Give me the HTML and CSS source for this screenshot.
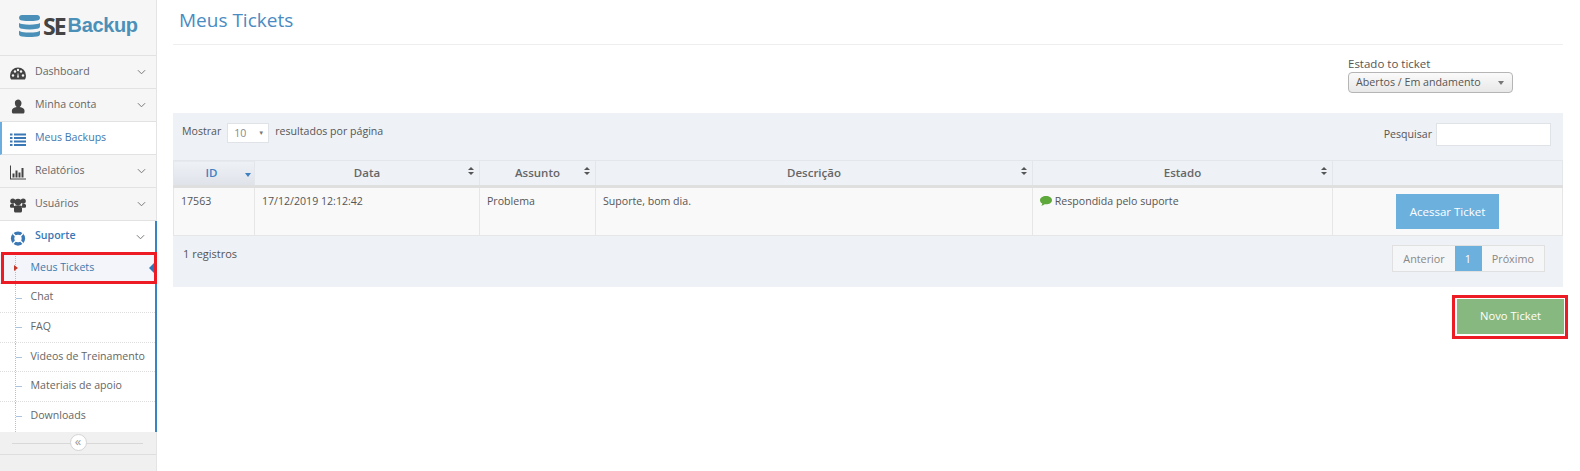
FILE: index.html
```html
<!DOCTYPE html>
<html lang="pt">
<head>
<meta charset="utf-8">
<title>Meus Tickets</title>
<link rel="stylesheet" href="styles.css">
</head>
<body>
<div class="app">
  <aside class="sidebar">
    <div class="logo">
      <svg class="logo-db" width="21" height="22" viewBox="0 0 21 22"><g fill="#4b90b8"><path d="M3 0h15c1.700 0 3 1.200 3 2.700S19.700 5.500 18 5.500c-5 .8-10 .8-15 0C1.300 5.500 0 4.200 0 2.700S1.300 0 3 0z"/><path d="M0 8c1 .6 2 1 3 1.100 5 .7 10 .7 15 0 1-.1 2-.5 3-1.100v3.200c0 1.400-1.300 2.500-3 2.600-5 .8-10 .8-15 0-1.700-.1-3-1.200-3-2.600z"/><path d="M0 15.800c1 .6 2 1 3 1.100 5 .7 10 .7 15 0 1-.1 2-.5 3-1.100V19c0 1.400-1.300 2.500-3 2.600-5 .6-10 .6-15 0-1.700-.1-3-1.200-3-2.600z"/></g></svg>
      <span class="logo-se">SE</span><span class="logo-backup">Backup</span>
    </div>
    <nav class="menu">
      <a class="item"><svg class="ico" viewBox="0 0 16 14"><path fill="#444" d="M8 1a8 8 0 0 0-8 8c0 1.500.4 3 1.100 4h13.800c.7-1 1.100-2.500 1.100-4a8 8 0 0 0-8-8z"/><g fill="#f6f6f6"><circle cx="3" cy="9" r="1.200"/><circle cx="5" cy="5" r="1.200"/><circle cx="8" cy="3.500" r="1.200"/><circle cx="11" cy="5" r="1.200"/><circle cx="13" cy="9" r="1.200"/><path d="M7 11l1-5 1 5z"/></g></svg><span class="label">Dashboard</span><svg class="chev" viewBox="0 0 10 6"><path d="M1 1l4 4 4-4"/></svg></a>
      <a class="item"><svg class="ico" viewBox="0 0 16 14"><path fill="#444" d="M8 0a3.500 3.500 0 0 1 3.500 3.800c0 1.500-.8 3-1.800 3.700 2.800.5 4.800 1.500 4.800 3.500v1.500c0 .8-.6 1.500-1.500 1.500h-9.600c-.9 0-1.500-.7-1.500-1.500V11c0-2 2-3 4.800-3.500-1-.7-1.800-2.200-1.800-3.700A3.500 3.500 0 0 1 8 0z"/></svg><span class="label">Minha conta</span><svg class="chev" viewBox="0 0 10 6"><path d="M1 1l4 4 4-4"/></svg></a>
      <a class="item active-link"><svg class="ico" viewBox="0 0 16 14"><path fill="#3a78b5" d="M0 1h2.500v2H0zM4 1h12v2H4zM0 4.500h2.500v2H0zM4 4.500h12v2H4zM0 8h2.500v2H0zM4 8h12v2H4zM0 11.500h2.500v2H0zM4 11.500h12v2H4z"/></svg><span class="label">Meus Backups</span></a>
      <a class="item"><svg class="ico" viewBox="0 0 16 14"><path fill="#444" d="M0 0h1v13h15v1H0zM2.500 8h2v4h-2zM5.500 5h2v7h-2zM8.500 7h2v5h-2zM11.500 2.500h2V12h-2z"/></svg><span class="label">Relatórios</span><svg class="chev" viewBox="0 0 10 6"><path d="M1 1l4 4 4-4"/></svg></a>
      <a class="item"><svg class="ico" viewBox="0 0 16 14"><g fill="#444"><circle cx="2.800" cy="2.600" r="2.600"/><circle cx="13.200" cy="2.600" r="2.600"/><circle cx="8" cy="3.600" r="3.300"/><path d="M0 6.200c1-.8 2-1 3.700-.8l.6 3.800H1.500C.6 9.200 0 8.700 0 7.900zM16 6.200c-1-.8-2-1-3.700-.8l-.6 3.800h2.800c.9 0 1.500-.5 1.500-1.300zM4 7.500c2.300-1 5.700-1 8 0v5c0 .8-.6 1.500-1.500 1.500h-5c-.9 0-1.500-.7-1.500-1.500z"/></g></svg><span class="label">Usuários</span><svg class="chev" viewBox="0 0 10 6"><path d="M1 1l4 4 4-4"/></svg></a>
      <div class="group">
        <a class="item open"><svg class="ico" viewBox="0 0 16 16"><circle cx="8" cy="8" r="7.600" fill="#3a78b5"/><circle cx="8" cy="8" r="3.900" fill="#fff"/><g stroke="#fff" stroke-width="1.500"><path d="M2.500 2.500l3 3M13.500 2.500l-3 3M2.500 13.500l3-3M13.500 13.500l-3-3"/></g></svg><span class="label">Suporte</span><svg class="chev" viewBox="0 0 10 6"><path d="M1 1l4 4 4-4"/></svg></a>
        <ul class="submenu">
          <li class="sub current"><span>Meus Tickets</span></li>
          <li class="sub"><span>Chat</span></li>
          <li class="sub"><span>FAQ</span></li>
          <li class="sub"><span>Videos de Treinamento</span></li>
          <li class="sub"><span>Materiais de apoio</span></li>
          <li class="sub"><span>Downloads</span></li>
        </ul>
      </div>
    </nav>
    <div class="collapse"><span class="collapse-btn">«</span></div>
  </aside>
  <main class="content">
    <h1 class="title">Meus Tickets</h1>
    <div class="status-filter">
      <label class="status-label">Estado to ticket</label>
      <div class="status-select">Abertos / Em andamento</div>
    </div>
    <section class="panel">
      <div class="panel-top">
        <div class="length">Mostrar <span class="length-select">10</span> resultados por página</div>
        <div class="search">Pesquisar <span class="search-input"></span></div>
      </div>
      <table class="tickets">
        <colgroup><col class="c1"><col class="c2"><col class="c3"><col class="c4"><col class="c5"><col></colgroup>
        <thead>
          <tr>
            <th class="sorted">ID</th>
            <th class="sortable">Data</th>
            <th class="sortable">Assunto</th>
            <th class="sortable">Descrição</th>
            <th class="sortable">Estado</th>
            <th></th>
          </tr>
        </thead>
        <tbody>
          <tr>
            <td>17563</td>
            <td>17/12/2019 12:12:42</td>
            <td>Problema</td>
            <td>Suporte, bom dia.</td>
            <td><svg class="bubble" viewBox="0 0 12 10"><path fill="#5fa83c" d="M6 0c3.300 0 6 1.800 6 4.200S9.300 8.300 6 8.300c-.5 0-1 0-1.400-.1C3.700 9 2.500 9.500 1.200 9.700c.6-.6 1-1.300 1.100-2.200C.9 6.800 0 5.600 0 4.200 0 1.800 2.700 0 6 0z"/></svg> Respondida pelo suporte</td>
            <td class="action"><span class="btn-access">Acessar Ticket</span></td>
          </tr>
        </tbody>
      </table>
      <div class="panel-bottom">
        <div class="count">1 registros</div>
        <div class="pager"><span class="page">Anterior</span><span class="page on">1</span><span class="page">Próximo</span></div>
      </div>
    </section>
    <div class="new-row"><span class="btn-new">Novo Ticket</span></div>
  </main>
</div>
<div class="mark mark-menu"></div>
</body>
</html>
```
FILE: styles.css
```css
* { box-sizing: border-box; }
html, body { margin: 0; padding: 0; height: 471px; overflow: hidden; background: #fff; }
body { font-family: "Open Sans", "Liberation Sans", sans-serif; font-size: 10.600px; color: #555; position: relative; }
.app { display: flex; height: 471px; }

.sidebar { width: 157px; flex: none; background: #f0f0f0; border-right: 1px solid #e4e4e4; display: flex; flex-direction: column; }
.logo { height: 56px; background: #f6f6f6; border-bottom: 1px solid #e2e2e2; display: flex; align-items: center; padding: 0 0 4px 19px; }
.logo-db { flex: none; margin-right: 3px; }
.logo-se { font-family: "Open Sans", sans-serif; font-weight: 700; font-size: 23px; letter-spacing: -2px; color: #444; margin-right: 3px; }
.logo-backup { font-family: "Liberation Sans", sans-serif; font-weight: 700; font-size: 20px; letter-spacing: -.35px; color: #4b90b8; }

.menu { display: flex; flex-direction: column; }
.item { height: 33px; display: flex; align-items: center; background: #f6f6f6; border-bottom: 1px solid #e2e2e2; padding: 0 10px 3px 10px; color: #666; flex: none; }
.ico { width: 16px; height: 15px; flex: none; margin-right: 9px; margin-top: 5px; }
.label { flex: 1; }
.chev { width: 9px; height: 6px; flex: none; fill: none; stroke: #777; stroke-width: 1.100; margin-top: 2px; }
.active-link { background: #fff; border-left: 2px solid #6cade0; padding-left: 8px; color: #3f78ad; }
.group { background: #fff; border-right: 2px solid #3a84c4; margin-right: -1px; }
.open { background: #fff; border-bottom: 0; color: #3a78b5; font-weight: 600; padding-bottom: 5px; }
.open .chev { margin-top: 4px; }
.open .ico { margin-top: 7px; }
.submenu { list-style: none; margin: 0; padding: 0; background: #fff; }
.sub { height: 29.600px; display: flex; align-items: center; padding-left: 30.500px; padding-bottom: 3px; border-bottom: 1px dotted #ddd; color: #666; position: relative; }
.sub::before { content: ""; position: absolute; left: 15px; top: 0; bottom: 0; border-left: 1px dotted #a9c4dc; }
.sub::after { content: ""; position: absolute; left: 16px; top: 14px; width: 6px; border-top: 1px dashed #a9c4dc; }
.sub:last-child { border-bottom: 0; }
.current { background: #f3f5fa; color: #3f78ad; }
.current::after { left: 14px; top: 11px; width: 0; height: 0; border: 3px solid transparent; border-left: 4px solid #c0392b; border-right: 0; }
.current span::after { content: ""; position: absolute; right: 0; top: 8px; border: 6.500px solid transparent; border-right: 6px solid #2f78b8; border-left: 0; }
.collapse { height: 23px; border-bottom: 1px solid #dedede; background: #f0f0f0; display: flex; align-items: center; justify-content: center; position: relative; }
.collapse::before { content: ""; position: absolute; left: 12px; right: 13px; top: 11px; border-top: 1px solid #d8d8d8; }
.collapse-btn { width: 17px; height: 17px; border-radius: 50%; border: 1px solid #d4d4d4; background: #fff; color: #9a9a9a; font-size: 13px; line-height: 13px; text-align: center; position: relative; }

.content { flex: 1; padding: 0 17px 0 16px; min-width: 0; }
.title { margin: 0; height: 45px; padding: 7px 0 0 6px; border-bottom: 1px solid #eee; font-size: 19px; font-weight: 400; line-height: 26px; color: #4a8bc2; }
.status-filter { height: 68px; padding: 11px 0 0 1175px; }
.status-label { display: block; font-size: 11.500px; line-height: 15px; color: #555; }
.status-select { width: 165px; height: 21px; margin-top: 1px; border: 1px solid #b5b5b5; border-radius: 4px; background: linear-gradient(#fafafa, #e8e8e8); padding-left: 7px; line-height: 19px; font-size: 10.700px; color: #555; position: relative; }
.status-select::after { content: ""; position: absolute; right: 8px; top: 8px; border: 3.500px solid transparent; border-top: 4px solid #777; border-bottom: 0; }

.panel { background: #eef1f6; height: 174px; display: flex; flex-direction: column; }
.panel-top { height: 47px; display: flex; justify-content: space-between; padding: 10px 12px 0 9px; }
.length { display: flex; align-items: flex-start; line-height: 16px; color: #555; }
.length-select { width: 42px; height: 20px; margin: 0 6px 0 6px; background: #fff; border: 1px solid #dfe3e8; padding-left: 6px; color: #888; line-height: 18px; position: relative; }
.length-select::after { content: "▼"; position: absolute; right: 4px; top: 0; font-size: 6px; color: #777; }
.search { display: flex; align-items: flex-start; line-height: 22px; color: #555; gap: 4px; }
.search-input { width: 115px; height: 23px; background: #fff; border: 1px solid #dfe3e8; }

.tickets { width: 1390px; table-layout: fixed; border-collapse: collapse; font-size: 10.600px; }
.c1 { width: 81px; } .c2 { width: 225px; } .c3 { width: 116px; } .c4 { width: 437px; } .c5 { width: 300px; }
.tickets th { height: 26px; border: 1px solid #e3e6ea; border-bottom: 3px solid #dfdfdf; font-size: 11.500px; font-weight: 600; color: #666; text-align: center; padding: 0 0 2px; position: relative; }
.sortable::before, .sortable::after { content: ""; position: absolute; right: 5px; border: 3px solid transparent; }
.sortable::before { top: 6px; border-bottom: 3.500px solid #555; border-top: 0; }
.sortable::after { top: 11px; border-top: 3.500px solid #555; border-bottom: 0; }
.tickets th.sorted { color: #3f80c0; background: linear-gradient(#eef1f6, #dfe3e9); padding-right: 5px; }
.sorted::after { content: ""; position: absolute; right: 3px; top: 12px; border: 3.500px solid transparent; border-top: 4px solid #3f80c0; border-bottom: 0; }
.tickets td { height: 49px; background: #f9f9f9; border: 1px solid #e6e6e6; vertical-align: top; padding: 6px 7px 0; line-height: 15px; color: #555; white-space: nowrap; }
.tickets td.action { text-align: center; padding: 6px 0 0; }
.bubble { width: 12px; height: 10px; vertical-align: -1px; }
.btn-access { display: inline-block; width: 103px; height: 35px; background: #6cb0de; color: #fff; line-height: 35px; font-size: 11.500px; text-align: center; }
.panel-bottom { flex: 1; display: flex; justify-content: space-between; padding: 9px 18px 0 10px; }
.count { font-size: 11px; line-height: 18px; color: #555; }
.pager { display: flex; height: 27px; border: 1px solid #e0e0e0; background: #f5f6f8; color: #888; font-size: 10.800px; }
.page { padding: 0 10px; line-height: 25px; }
.page.on { background: #6cb0de; color: #fff; padding: 0 10px; width: 27px; height: 25px; }

.new-row { display: flex; justify-content: flex-end; margin: 12px -1px 0 0; }
.btn-new { width: 108px; height: 36px; background: #87b87f; background-clip: padding-box; border-left: 1px solid #fff; border-bottom: 1px solid #fff; color: #fff; font-size: 11.200px; line-height: 34px; text-align: center; box-shadow: 0 0 0 1px #fff, 0 0 0 4px #ed1c24; }

.mark-menu { position: absolute; left: 1px; top: 252px; width: 156px; height: 32px; border: 3px solid #ed1c24; pointer-events: none; }
```
